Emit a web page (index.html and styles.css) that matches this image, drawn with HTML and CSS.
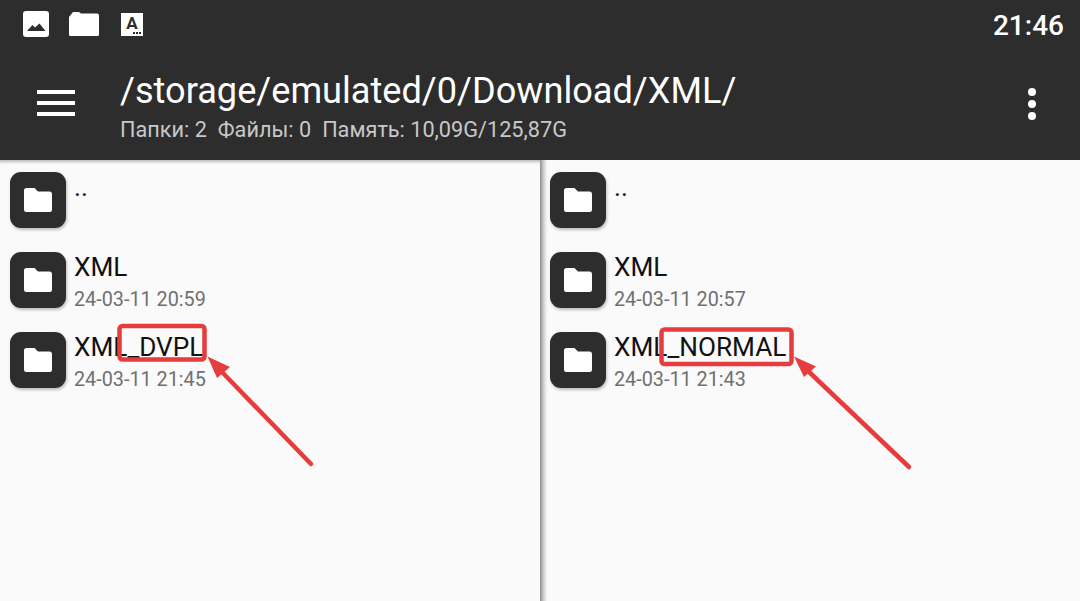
FILE: index.html
```html
<!DOCTYPE html>
<html lang="en">
<head>
    <meta charset="UTF-8">
    <meta name="viewport" content="width=device-width, initial-scale=1.0">
    <title>File manager</title>
    <link rel="stylesheet" href="styles.css">
</head>
<body>
    <svg class="defs" width="0" height="0">
        <symbol id="folder" viewBox="0 0 28 24">
            <path d="M2.500 0H10.500L14 3.500H25.500A2.500 2.500 0 0 1 28 6V21.500A2.500 2.500 0 0 1 25.500 24H2.500A2.500 2.500 0 0 1 0 21.500V2.500A2.500 2.500 0 0 1 2.500 0Z" fill="#fff"/>
        </symbol>
    </svg>
    <div class="status-bar">
        <div class="status-icons">
            <svg class="icon-image" width="26" height="26" viewBox="0 0 26 26">
                <rect width="26" height="26" rx="3" fill="#fff"/>
                <path d="M4 20L9.500 14L12 16.500L16.500 12.500L22.500 20Z" fill="#2d2d2d"/>
            </svg>
            <svg class="icon-sd" width="30" height="24" viewBox="0 0 30 24">
                <path d="M0 5L4 0H10L12 1.500H28A2 2 0 0 1 30 3.500V22.500A1.500 1.500 0 0 1 28.500 24H1.500A1.500 1.500 0 0 1 0 22.500Z" fill="#fff"/>
            </svg>
            <div class="icon-font">
                <span class="icon-font-letter">A</span>
                <span class="icon-font-dots">
                    <i></i><i></i><i></i>
                </span>
            </div>
        </div>
        <span class="clock">21:46</span>
    </div>
    <header class="toolbar">
        <div class="menu-btn">
            <span></span>
            <span></span>
            <span></span>
        </div>
        <div class="toolbar-text">
            <div class="path">/storage/emulated/0/Download/XML/</div>
            <div class="stats">
                <span>Папки: 2</span>
                <span>Файлы: 0</span>
                <span>Память: 10,09G/125,87G</span>
            </div>
        </div>
        <div class="more-btn">
            <span></span>
            <span></span>
            <span></span>
        </div>
    </header>
    <main class="panes">
        <section class="pane">
            <div class="row">
                <div class="folder"><svg width="28" height="24"><use href="#folder"/></svg></div>
                <div class="row-text">
                    <div class="name">..</div>
                </div>
            </div>
            <div class="row">
                <div class="folder"><svg width="28" height="24"><use href="#folder"/></svg></div>
                <div class="row-text">
                    <div class="name">XML</div>
                    <div class="date">24-03-11 20:59</div>
                </div>
            </div>
            <div class="row">
                <div class="folder"><svg width="28" height="24"><use href="#folder"/></svg></div>
                <div class="row-text">
                    <div class="name">XML_DVPL</div>
                    <div class="date">24-03-11 21:45</div>
                </div>
            </div>
        </section>
        <section class="pane pane-right">
            <div class="row">
                <div class="folder"><svg width="28" height="24"><use href="#folder"/></svg></div>
                <div class="row-text">
                    <div class="name">..</div>
                </div>
            </div>
            <div class="row">
                <div class="folder"><svg width="28" height="24"><use href="#folder"/></svg></div>
                <div class="row-text">
                    <div class="name">XML</div>
                    <div class="date">24-03-11 20:57</div>
                </div>
            </div>
            <div class="row">
                <div class="folder"><svg width="28" height="24"><use href="#folder"/></svg></div>
                <div class="row-text">
                    <div class="name">XML_NORMAL</div>
                    <div class="date">24-03-11 21:43</div>
                </div>
            </div>
        </section>
    </main>
    <!-- red annotations drawn on top of the screenshot -->
    <svg class="marks" width="1080" height="601" viewBox="0 0 1080 601">
        <rect x="119.500" y="326" width="85" height="33.500" rx="3" fill="none" stroke="#e63c3e" stroke-width="4.500"/>
        <rect x="661.500" y="329.500" width="130" height="34.500" rx="3" fill="none" stroke="#e63c3e" stroke-width="4.500"/>
        <path d="M311 464L222 372" stroke="#e63c3e" stroke-width="4.500" stroke-linecap="round"/>
        <path d="M207.500 356.500L230 367L217 378Z" fill="#e63c3e"/>
        <path d="M909 467L807 370" stroke="#e63c3e" stroke-width="4.500" stroke-linecap="round"/>
        <path d="M794 356.500L816 366.500L804 377Z" fill="#e63c3e"/>
    </svg>
</body>
</html>
```
FILE: styles.css
```css
body {
    margin: 0;
    width: 1080px;
    height: 601px;
    overflow: hidden;
    position: relative;
    font-family: Roboto, sans-serif;
    background-color: #fafafa;
}
.defs {
    display: block;
    height: 0;
}
.status-bar {
    height: 50px;
    background-color: #2d2d2d;
    display: flex;
    align-items: center;
    justify-content: space-between;
    padding: 0 16px 0 23px;
}
.status-icons {
    display: flex;
    align-items: center;
    gap: 20px;
    padding-bottom: 2px;
}
.icon-font {
    width: 22px;
    height: 23px;
    margin-left: 2px;
    background-color: #fff;
    display: flex;
    flex-direction: column;
    align-items: center;
    color: #2d2d2d;
}
.icon-font-letter {
    font-size: 17px;
    font-weight: 700;
    line-height: 17px;
    margin-top: 2px;
}
.icon-font-dots {
    display: flex;
    gap: 1px;
    align-self: flex-end;
    margin-right: 2px;
}
.icon-font-dots i {
    width: 2px;
    height: 2px;
    background-color: #2d2d2d;
}
.clock {
    color: #fff;
    font-size: 28px;
    font-weight: 500;
}
.toolbar {
    height: 110px;
    background-color: #2d2d2d;
    display: flex;
    align-items: flex-start;
    box-sizing: border-box;
    padding-left: 37px;
    position: relative;
}
.menu-btn {
    width: 38px;
    margin-top: 40px;
    display: flex;
    flex-direction: column;
    gap: 7px;
}
.menu-btn span {
    height: 4px;
    background-color: #fff;
}
.toolbar-text {
    margin-left: 45px;
    flex: 1;
    padding-top: 19px;
}
.path {
    color: #fff;
    font-size: 36.150px;
    line-height: 44px;
}
.stats {
    color: #c8c8c8;
    font-size: 21.700px;
    line-height: 24px;
    margin-top: 5px;
    display: flex;
    gap: 11px;
}
.more-btn {
    margin: 38px 44px 0 0;
    display: flex;
    flex-direction: column;
    gap: 4px;
}
.more-btn span {
    width: 8px;
    height: 8px;
    border-radius: 50%;
    background-color: #fff;
}
.panes {
    display: flex;
    height: 441px;
    box-shadow: inset 0 4px 3px -2px rgba(0, 0, 0, 0.25);
}
.pane {
    width: 540px;
    box-sizing: border-box;
    padding: 12px 0 0 10px;
}
.pane-right {
    background: linear-gradient(to right, #8f8f8f 0, #c4c4c4 3px, #eeeeee 6px, #fafafa 8px);
}
.row {
    height: 80px;
    display: flex;
    align-items: flex-start;
    gap: 8px;
}
.folder {
    width: 56px;
    height: 56px;
    border-radius: 11px;
    background-color: #2d2d2d;
    box-shadow: 1px 2px 3px rgba(0, 0, 0, 0.25);
    display: flex;
    align-items: center;
    justify-content: center;
}
.folder svg {
    display: block;
}
.name {
    font-size: 26.200px;
    line-height: 30px;
    color: #111;
}
.date {
    font-size: 19.800px;
    line-height: 24px;
    margin-top: 6px;
    color: #707070;
}
.marks {
    position: absolute;
    top: 0;
    left: 0;
}
```
